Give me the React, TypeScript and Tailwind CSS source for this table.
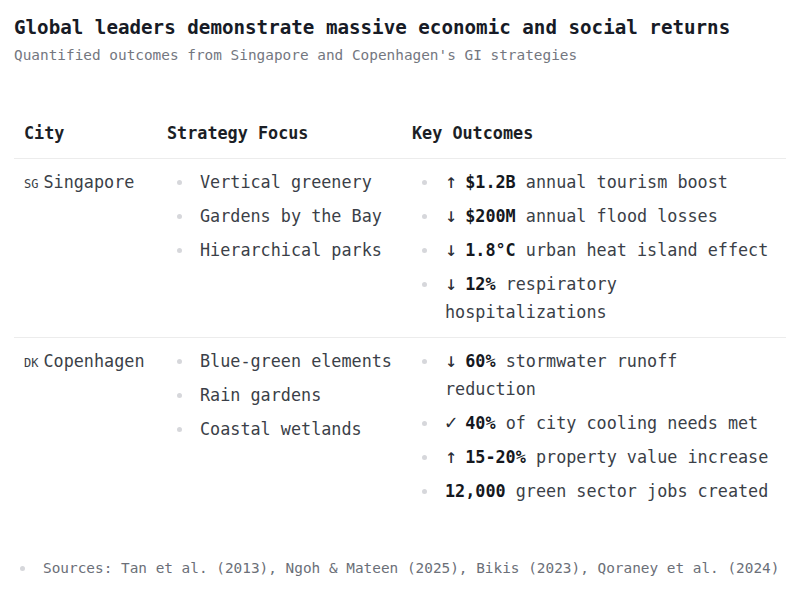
import type { ReactNode } from 'react';

type Outcome = {
  icon?: string;
  value: string;
  text: string;
};

type CityRow = {
  code: string;
  city: string;
  focus: string[];
  outcomes: Outcome[];
};

const rows: CityRow[] = [
  {
    code: 'SG',
    city: 'Singapore',
    focus: ['Vertical greenery', 'Gardens by the Bay', 'Hierarchical parks'],
    outcomes: [
      { icon: '↑', value: '$1.2B', text: 'annual tourism boost' },
      { icon: '↓', value: '$200M', text: 'annual flood losses' },
      { icon: '↓', value: '1.8°C', text: 'urban heat island effect' },
      { icon: '↓', value: '12%', text: 'respiratory hospitalizations' },
    ],
  },
  {
    code: 'DK',
    city: 'Copenhagen',
    focus: ['Blue-green elements', 'Rain gardens', 'Coastal wetlands'],
    outcomes: [
      { icon: '↓', value: '60%', text: 'stormwater runoff reduction' },
      { icon: '✓', value: '40%', text: 'of city cooling needs met' },
      { icon: '↑', value: '15-20%', text: 'property value increase' },
      { value: '12,000', text: 'green sector jobs created' },
    ],
  },
];

const mono = "font-['DejaVu_Sans_Mono','Liberation_Mono',monospace]";

function Bullet({ children }: { children: ReactNode }) {
  return (
    <li className="flex">
      <span className="flex h-[28px] w-[33px] shrink-0 items-center pl-[10px]">
        <span className="size-[5px] rounded-full bg-[#d6d7db]" />
      </span>
      <span className="min-w-0">{children}</span>
    </li>
  );
}

export default function App() {
  return (
    <div className={cn(mono, 'min-h-[600px] w-[810px] bg-white px-[14px] pt-[14px]')}>
      <h1 className="text-[19.2px] font-bold leading-[28px] text-[#171b26]">
        Global leaders demonstrate massive economic and social returns
      </h1>
      <p className="mt-[2px] text-[14.4px] leading-[22px] text-[#74777f]">
        Quantified outcomes from Singapore and Copenhagen's GI strategies
      </p>

      <div className="mt-[43px] w-[772px]">
        <div className="grid grid-cols-[143px_245px_1fr] border-b border-[#ececec] text-[16.8px] font-bold leading-[28px] text-[#1c1f26]">
          <div className="pl-[10px] pt-[10px] pb-[11px]">City</div>
          <div className="pl-[10px] pt-[10px] pb-[11px]">Strategy Focus</div>
          <div className="pl-[10px] pt-[10px] pb-[11px]">Key Outcomes</div>
        </div>

        {rows.map((row, i) => (
          <div
            key={row.city}
            className={cn(
              'grid grid-cols-[143px_245px_1fr] text-[16.8px] leading-[28px] text-[#3b3f48]',
              i < rows.length - 1 && 'border-b border-[#ececec]',
            )}
          >
            <div className="flex items-baseline gap-[5px] pl-[10px] pt-[9px] pb-[11px]">
              <span className="text-[12px] text-[#3b3f48]">{row.code}</span>
              <span>{row.city}</span>
            </div>
            <div className="pl-[10px] pr-[6px] pt-[9px] pb-[11px]">
              <ul className="flex flex-col gap-[6px]">
                {row.focus.map(f => (
                  <Bullet key={f}>{f}</Bullet>
                ))}
              </ul>
            </div>
            <div className="pl-[10px] pr-[10px] pt-[9px] pb-[11px]">
              <ul className="flex flex-col gap-[6px]">
                {row.outcomes.map(o => (
                  <Bullet key={o.text}>
                    {o.icon && (
                      <>
                        <span className="inline-block w-[10.1px] overflow-visible text-[20px] leading-[0] text-[#2a2e36]">
                          {o.icon}
                        </span>{' '}
                      </>
                    )}
                    <span className="font-bold text-[#15181e]">{o.value}</span> {o.text}
                  </Bullet>
                ))}
              </ul>
            </div>
          </div>
        ))}
      </div>

      <div className="mt-[41px] flex items-center text-[14.4px] leading-[22px] text-[#6b6f78]">
        <span className="flex w-[29px] shrink-0 items-center pl-[6px]">
          <span className="size-[5px] rounded-full bg-[#d6d7db]" />
        </span>
        <span>Sources: Tan et al. (2013), Ngoh &amp; Mateen (2025), Bikis (2023), Qoraney et al. (2024)</span>
      </div>
    </div>
  );
}

function cn(...parts: (string | false | undefined)[]) {
  return parts.filter(Boolean).join(' ');
}
